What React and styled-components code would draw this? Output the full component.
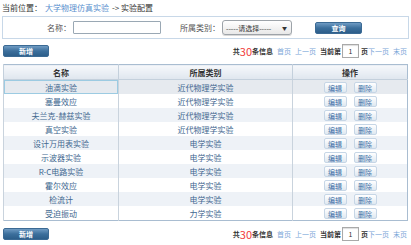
import React from 'react';
import styled, { createGlobalStyle } from 'styled-components';

const GlobalStyle = createGlobalStyle`
  body {
    margin: 0;
    background: #fff;
    font-family: "Noto Sans CJK SC", "DejaVu Sans", sans-serif;
    font-size: 8px;
    color: #333;
  }
`;

const rows = [
  ['油滴实验', '近代物理学实验'],
  ['塞曼效应', '近代物理学实验'],
  ['夫兰克-赫兹实验', '近代物理学实验'],
  ['真空实验', '近代物理学实验'],
  ['设计万用表实验', '电学实验'],
  ['示波器实验', '电学实验'],
  ['R-C电路实验', '电学实验'],
  ['霍尔效应', '电学实验'],
  ['检流计', '电学实验'],
  ['受迫振动', '力学实验'],
];

const Page = styled.div`
  width: 411px;
  padding: 0 2px;
  box-sizing: border-box;
`;

const Crumb = styled.div`
  height: 14px;
  line-height: 14px;
  padding-top: 1px;
  color: #333;
`;

const Link = styled.a`
  color: #5a8fce;
  text-decoration: none;
  margin: ${p => p.$gap ? '0 3px' : '0'};
`;

const SearchBox = styled.div`
  margin-top: 1px;
  height: 21px;
  border: 1px solid #c8d8e8;
  display: flex;
  align-items: center;
`;

const Label = styled.span`
  width: ${p => p.$w}px;
  text-align: right;
  color: #555;
  padding-right: 2px;
  white-space: nowrap;
  flex-shrink: 0;
`;

const TextInput = styled.div`
  width: 86px;
  height: 11px;
  border: 1px solid #9aa8b4;
  border-radius: 1px;
  background: #fff;
`;

const Select = styled.div`
  height: 13px;
  border: 1px solid #9da3a9;
  border-radius: 3px;
  background: linear-gradient(#ffffff, #e8e8e8);
  display: flex;
  align-items: center;
  justify-content: space-between;
  padding: 0 4px 0 3px;
  width: 61px;
  margin-right: 23px;
  font-size: 7px;
  color: #333;
  box-shadow: 0 1px 0 #d8d8d8;
  flex-shrink: 0;
`;

const Caret = styled.span`
  font-size: 5px;
`;

const DarkButton = styled.div`
  width: ${p => p.$w}px;
  height: 12px;
  line-height: 11px;
  text-align: center;
  color: #fff;
  font-weight: bold;
  font-size: 7px;
  border-radius: 2px;
  background: linear-gradient(#6f9bc3, #3c6f9c 50%, #2c5e8a);
  border: 1px solid #3b6a94;
  box-sizing: border-box;
  flex-shrink: 0;
`;

const Bar = styled.div`
  display: flex;
  justify-content: space-between;
  align-items: center;
  height: 14px;
  margin: ${p => p.$m};
  padding-left: 1px;
`;

const Pager = styled.div`
  display: flex;
  align-items: center;
  color: #333;
  font-size: 7px;
  font-weight: bold;
  padding-right: 2px;
`;

const Count = styled.span`
  color: #f03c3c;
  font-size: 11px;
  line-height: 11px;
  font-weight: normal;
`;

const PageLink = styled.span`
  color: #7aa6d8;
  font-weight: normal;
  margin-left: ${p => p.$ml || 0}px;
  margin-right: ${p => p.$mr || 0}px;
`;

const PageInput = styled.div`
  width: 17px;
  height: 14px;
  border: 1px solid #a9a9a9;
  box-sizing: border-box;
  text-align: center;
  line-height: 12px;
  font-size: 7px;
  font-weight: normal;
  margin: 0 2px 0 1px;
  box-shadow: inset 0 1px 1px #ddd;
`;

const Table = styled.table`
  width: 405px;
  margin-left: 1px;
  margin-top: 6px;
  border-collapse: collapse;
  border: 1px solid #a9bdd1;
  table-layout: fixed;
`;

const Th = styled.th`
  height: 14px;
  padding: 0;
  font-weight: bold;
  color: #333;
  background: linear-gradient(#f6f8fb, #dfe6ee);
  border-left: 1px solid #c4d0dc;
  border-bottom: 1px solid #c4d0dc;
  line-height: 13px;
`;

const Tr = styled.tr`
  background: ${p => (p.$active ? '#e6eaef' : p.$odd ? '#eef2f7' : '#fff')};
`;

const Td = styled.td`
  height: 14px;
  padding: 0;
  text-align: center;
  color: #41678f;
  line-height: 13px;
  border-left: 1px solid #c9d3dd;
  box-shadow: ${p => (p.$focus ? 'inset 0 0 0 1px #9ccbe2' : 'none')};
`;

const Actions = styled.div`
  display: flex;
  justify-content: center;
  gap: 7px;
`;

const SmallButton = styled.div`
  width: 23px;
  height: 11px;
  line-height: 10px;
  font-size: 7px;
  color: #3d6ea6;
  border: 1px solid #c6d6e6;
  border-radius: 2px;
  background: linear-gradient(#ffffff, #dfe8f1);
  box-sizing: border-box;
  text-align: center;
`;

const AddButton = () => <DarkButton $w={46}>新增</DarkButton>;

const Pagination = () => (
  <Pager>
    <span>共</span>
    <Count>30</Count>
    <span>条信息</span>
    <PageLink $ml={4}>首页</PageLink>
    <PageLink $ml={4} $mr={4}>上一页</PageLink>
    <span>当前第</span>
    <PageInput>1</PageInput>
    <span>页</span>
    <PageLink>下一页</PageLink>
    <PageLink $ml={4}>末页</PageLink>
  </Pager>
);

export default function App() {
  return (
    <Page>
      <GlobalStyle />
      <Crumb>
        当前位置：<Link $gap>大学物理仿真实验</Link>-&gt; 实验配置
      </Crumb>
      <SearchBox>
        <Label $w={68}>名称：</Label>
        <TextInput />
        <Label $w={59}>所属类别：</Label>
        <Select>
          <span>-----请选择-----</span>
          <Caret>▼</Caret>
        </Select>
        <DarkButton $w={47}>查询</DarkButton>
      </SearchBox>
      <Bar $m="5px 0 0">
        <AddButton />
        <Pagination />
      </Bar>
      <Table>
        <colgroup>
          <col style={{ width: 115 }} />
          <col style={{ width: 174 }} />
          <col />
        </colgroup>
        <thead>
          <tr>
            <Th>名称</Th>
            <Th>所属类别</Th>
            <Th>操作</Th>
          </tr>
        </thead>
        <tbody>
          {rows.map(([name, cat], i) => (
            <Tr key={name} $active={i === 0} $odd={i % 2 === 0}>
              <Td $focus={i === 0}>{name}</Td>
              <Td>{cat}</Td>
              <Td>
                <Actions>
                  <SmallButton>编辑</SmallButton>
                  <SmallButton>删除</SmallButton>
                </Actions>
              </Td>
            </Tr>
          ))}
        </tbody>
      </Table>
      <Bar $m="6px 0 0">
        <AddButton />
        <Pagination />
      </Bar>
    </Page>
  );
}
